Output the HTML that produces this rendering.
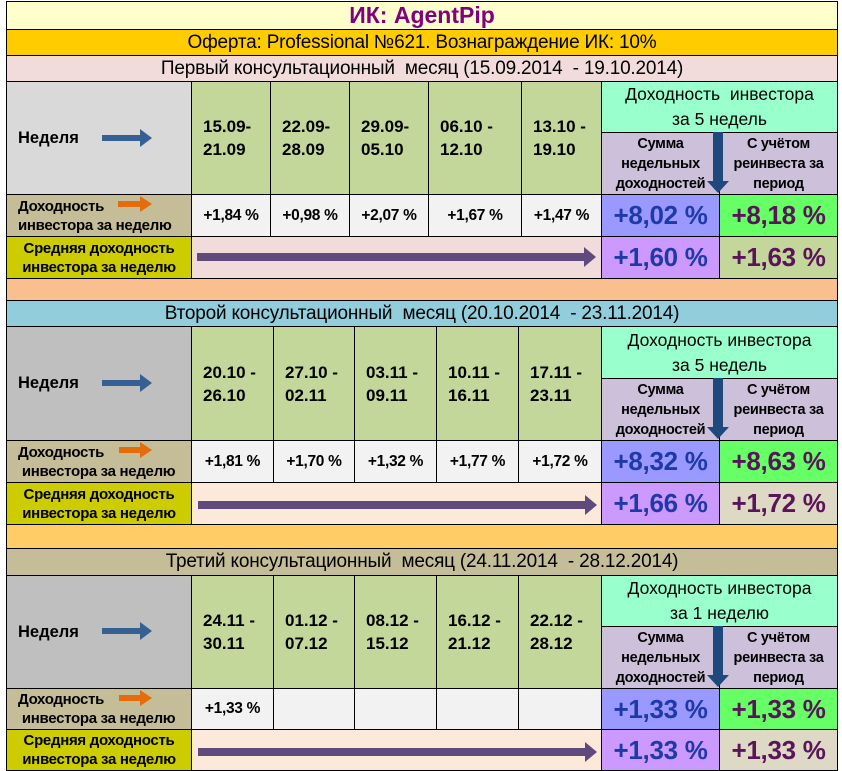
<!DOCTYPE html>
<html><head><meta charset="utf-8"><style>
body{margin:0;width:842px;height:771px;background:#fff;position:relative;overflow:hidden;font-family:"Liberation Sans","DejaVu Sans",sans-serif;}
.c{position:absolute;box-sizing:border-box;border:1px solid #000;display:flex;align-items:center;justify-content:center;text-align:center;color:#000;white-space:nowrap;}
.b{font-weight:bold}
.h{font-size:19px;letter-spacing:-0.2px}
.d{justify-content:flex-start;padding-left:11px;font-weight:bold;font-size:17px;line-height:23px;text-align:left}
.p{font-size:15.5px;font-weight:bold;letter-spacing:-0.3px}
.big{font-size:26px;font-weight:bold;letter-spacing:-0.3px}
.lbl{font-size:15px;font-weight:bold;line-height:19px;letter-spacing:-0.3px}
.sm{font-size:14.5px;font-weight:bold;line-height:20px;letter-spacing:-0.3px}
.top{font-size:17.5px;line-height:25px}
.arr{position:absolute}
</style></head><body>

<div class="c b" style="left:6px;top:1px;width:832px;height:29px;background:#ffffcc;color:#800080;font-size:23px">ИК: AgentPip</div>
<div class="c h" style="left:6px;top:29px;width:832px;height:27px;background:#ffcc00">Оферта: Professional №621. Вознаграждение ИК: 10%</div>

<!-- Section 1 -->
<div class="c h" style="left:6px;top:55px;width:832px;height:27px;background:#f2dcdb">Первый консультационный&nbsp; месяц (15.09.2014&nbsp; - 19.10.2014)</div>
<div class="c b" style="left:6px;top:81px;width:186px;height:114px;background:#d9d9d9;justify-content:flex-start;padding-left:11px;font-size:16.5px">Неделя</div>
<div class="c d" style="left:191px;top:81px;width:80px;height:114px;background:#c4d79b">15.09-<br>21.09</div>
<div class="c d" style="left:270px;top:81px;width:80px;height:114px;background:#c4d79b">22.09-<br>28.09</div>
<div class="c d" style="left:349px;top:81px;width:80px;height:114px;background:#c4d79b">29.09-<br>05.10</div>
<div class="c d" style="left:428px;top:81px;width:94px;height:114px;background:#c4d79b">06.10 -<br>12.10</div>
<div class="c d" style="left:521px;top:81px;width:81px;height:114px;background:#c4d79b">13.10 -<br>19.10</div>
<div class="c top" style="left:601px;top:81px;width:237px;height:52px;background:#99ffcc">Доходность&nbsp; инвестора<br>за 5 недель</div>
<div class="c sm" style="left:601px;top:132px;width:119px;height:63px;background:#ccc0da">Сумма<br>недельных<br>доходностей</div>
<div class="c sm" style="left:719px;top:132px;width:119px;height:63px;background:#ccc0da">С учётом<br>реинвеста за<br>период</div>
<div class="c lbl" style="left:6px;top:194px;width:186px;height:43px;background:#c4bd97;justify-content:flex-start;text-align:left;padding-left:11px">Доходность<br>инвестора за неделю</div>
<div class="c p" style="left:191px;top:194px;width:80px;height:43px;background:#f2f2f2">+1,84 %</div>
<div class="c p" style="left:270px;top:194px;width:80px;height:43px;background:#f2f2f2">+0,98 %</div>
<div class="c p" style="left:349px;top:194px;width:80px;height:43px;background:#f2f2f2">+2,07 %</div>
<div class="c p" style="left:428px;top:194px;width:94px;height:43px;background:#f2f2f2">+1,67 %</div>
<div class="c p" style="left:521px;top:194px;width:81px;height:43px;background:#f2f2f2">+1,47 %</div>
<div class="c big" style="left:601px;top:194px;width:119px;height:43px;background:#9999ff;color:#1f3aa8">+8,02 %</div>
<div class="c big" style="left:719px;top:194px;width:119px;height:43px;background:#66ff66;color:#5a145a">+8,18 %</div>
<div class="c lbl" style="left:6px;top:236px;width:186px;height:43px;background:#cccc00">Средняя доходность<br>инвестора за неделю</div>
<div class="c" style="left:191px;top:236px;width:411px;height:43px;background:#f2dcdb"></div>
<div class="c big" style="left:601px;top:236px;width:119px;height:43px;background:#cc99ff;color:#1f3aa8">+1,60 %</div>
<div class="c big" style="left:719px;top:236px;width:119px;height:43px;background:#c4d79b;color:#5a145a">+1,63 %</div>
<div class="c" style="left:6px;top:278px;width:832px;height:23px;background:#fabf8f"></div>

<!-- Section 2 -->
<div class="c h" style="left:6px;top:300px;width:832px;height:27px;background:#92cddc">Второй консультационный&nbsp; месяц (20.10.2014&nbsp; - 23.11.2014)</div>
<div class="c b" style="left:6px;top:326px;width:186px;height:115px;background:#bfbfbf;justify-content:flex-start;padding-left:11px;font-size:16.5px">Неделя</div>
<div class="c d" style="left:191px;top:326px;width:83px;height:115px;background:#c4d79b">20.10 -<br>26.10</div>
<div class="c d" style="left:273px;top:326px;width:82px;height:115px;background:#c4d79b">27.10 -<br>02.11</div>
<div class="c d" style="left:354px;top:326px;width:83px;height:115px;background:#c4d79b">03.11 -<br>09.11</div>
<div class="c d" style="left:436px;top:326px;width:83px;height:115px;background:#c4d79b">10.11 -<br>16.11</div>
<div class="c d" style="left:518px;top:326px;width:84px;height:115px;background:#c4d79b">17.11 -<br>23.11</div>
<div class="c top" style="left:601px;top:326px;width:237px;height:53px;background:#99ffcc">Доходность инвестора<br>за 5 недель</div>
<div class="c sm" style="left:601px;top:378px;width:119px;height:63px;background:#ccc0da">Сумма<br>недельных<br>доходностей</div>
<div class="c sm" style="left:719px;top:378px;width:119px;height:63px;background:#ccc0da">С учётом<br>реинвеста за<br>период</div>
<div class="c lbl" style="left:6px;top:440px;width:186px;height:43px;background:#c4bd97;justify-content:flex-start;text-align:left;padding-left:11px">Доходность<br>&nbsp;инвестора за неделю</div>
<div class="c p" style="left:191px;top:440px;width:83px;height:43px;background:#f2f2f2">+1,81 %</div>
<div class="c p" style="left:273px;top:440px;width:82px;height:43px;background:#f2f2f2">+1,70 %</div>
<div class="c p" style="left:354px;top:440px;width:83px;height:43px;background:#f2f2f2">+1,32 %</div>
<div class="c p" style="left:436px;top:440px;width:83px;height:43px;background:#f2f2f2">+1,77 %</div>
<div class="c p" style="left:518px;top:440px;width:84px;height:43px;background:#f2f2f2">+1,72 %</div>
<div class="c big" style="left:601px;top:440px;width:119px;height:43px;background:#9999ff;color:#1f3aa8">+8,32 %</div>
<div class="c big" style="left:719px;top:440px;width:119px;height:43px;background:#66ff66;color:#5a145a">+8,63 %</div>
<div class="c lbl" style="left:6px;top:482px;width:186px;height:43px;background:#cccc00">Средняя доходность<br>инвестора за неделю</div>
<div class="c" style="left:191px;top:482px;width:411px;height:43px;background:#fde9d9"></div>
<div class="c big" style="left:601px;top:482px;width:119px;height:43px;background:#cc99ff;color:#1f3aa8">+1,66 %</div>
<div class="c big" style="left:719px;top:482px;width:119px;height:43px;background:#ddd9c4;color:#5a145a">+1,72 %</div>
<div class="c" style="left:6px;top:524px;width:832px;height:25px;background:#ffcc66"></div>

<!-- Section 3 -->
<div class="c h" style="left:6px;top:548px;width:832px;height:28px;background:#c4bd97">Третий консультационный&nbsp; месяц (24.11.2014&nbsp; - 28.12.2014)</div>
<div class="c b" style="left:6px;top:575px;width:186px;height:114px;background:#bfbfbf;justify-content:flex-start;padding-left:11px;font-size:16.5px">Неделя</div>
<div class="c d" style="left:191px;top:575px;width:83px;height:114px;background:#c4d79b">24.11 -<br>30.11</div>
<div class="c d" style="left:273px;top:575px;width:82px;height:114px;background:#c4d79b">01.12 -<br>07.12</div>
<div class="c d" style="left:354px;top:575px;width:83px;height:114px;background:#c4d79b">08.12 -<br>15.12</div>
<div class="c d" style="left:436px;top:575px;width:83px;height:114px;background:#c4d79b">16.12 -<br>21.12</div>
<div class="c d" style="left:518px;top:575px;width:84px;height:114px;background:#c4d79b">22.12 -<br>28.12</div>
<div class="c top" style="left:601px;top:575px;width:237px;height:52px;background:#99ffcc">Доходность инвестора<br>за 1 неделю</div>
<div class="c sm" style="left:601px;top:626px;width:119px;height:63px;background:#ccc0da">Сумма<br>недельных<br>доходностей</div>
<div class="c sm" style="left:719px;top:626px;width:119px;height:63px;background:#ccc0da">С учётом<br>реинвеста за<br>период</div>
<div class="c lbl" style="left:6px;top:688px;width:186px;height:42px;background:#c4bd97;justify-content:flex-start;text-align:left;padding-left:11px">Доходность<br>&nbsp;инвестора за неделю</div>
<div class="c p" style="left:191px;top:688px;width:83px;height:42px;background:#f2f2f2">+1,33 %</div>
<div class="c p" style="left:273px;top:688px;width:82px;height:42px;background:#f2f2f2"></div>
<div class="c p" style="left:354px;top:688px;width:83px;height:42px;background:#f2f2f2"></div>
<div class="c p" style="left:436px;top:688px;width:83px;height:42px;background:#f2f2f2"></div>
<div class="c p" style="left:518px;top:688px;width:84px;height:42px;background:#f2f2f2"></div>
<div class="c big" style="left:601px;top:688px;width:119px;height:42px;background:#9999ff;color:#1f3aa8">+1,33 %</div>
<div class="c big" style="left:719px;top:688px;width:119px;height:42px;background:#66ff66;color:#5a145a">+1,33 %</div>
<div class="c lbl" style="left:6px;top:729px;width:186px;height:42px;background:#cccc00">Средняя доходность<br>инвестора за неделю</div>
<div class="c" style="left:191px;top:729px;width:411px;height:42px;background:#fde9d9"></div>
<div class="c big" style="left:601px;top:729px;width:119px;height:42px;background:#cc99ff;color:#1f3aa8">+1,33 %</div>
<div class="c big" style="left:719px;top:729px;width:119px;height:42px;background:#ddd9c4;color:#5a145a">+1,33 %</div>

<!-- arrows -->
<svg class="arr" style="left:0;top:0" width="842" height="771">
  <g fill="#376092">
    <path d="M102 135h38v-6l12 9-12 9v-6h-38z"/>
    <path d="M102 380h38v-6l12 9-12 9v-6h-38z"/>
    <path d="M102 628h38v-6l12 9-12 9v-6h-38z"/>
  </g>
  <g fill="#e46c0a">
    <path d="M118 201h22v-5l12 8-12 8v-5h-22z"/>
    <path d="M119 447h21v-5l12 8-12 8v-5h-21z"/>
    <path d="M119 695h21v-5l12 8-12 8v-5h-21z"/>
  </g>
  <g fill="#604a7b">
    <path d="M197 253h387v-6l12 10-12 10v-6h-387z"/>
    <path d="M198 501h387v-6l12 10-12 10v-6h-387z"/>
    <path d="M198 748h387v-6l12 10-12 10v-6h-387z"/>
  </g>
  <g fill="#1f497d">
    <path d="M713 132h10v49h6l-11 12-11-12h6z"/>
    <path d="M713 378h10v49h6l-11 12-11-12h6z"/>
    <path d="M713 626h10v49h6l-11 12-11-12h6z"/>
  </g>
</svg>
</body></html>
